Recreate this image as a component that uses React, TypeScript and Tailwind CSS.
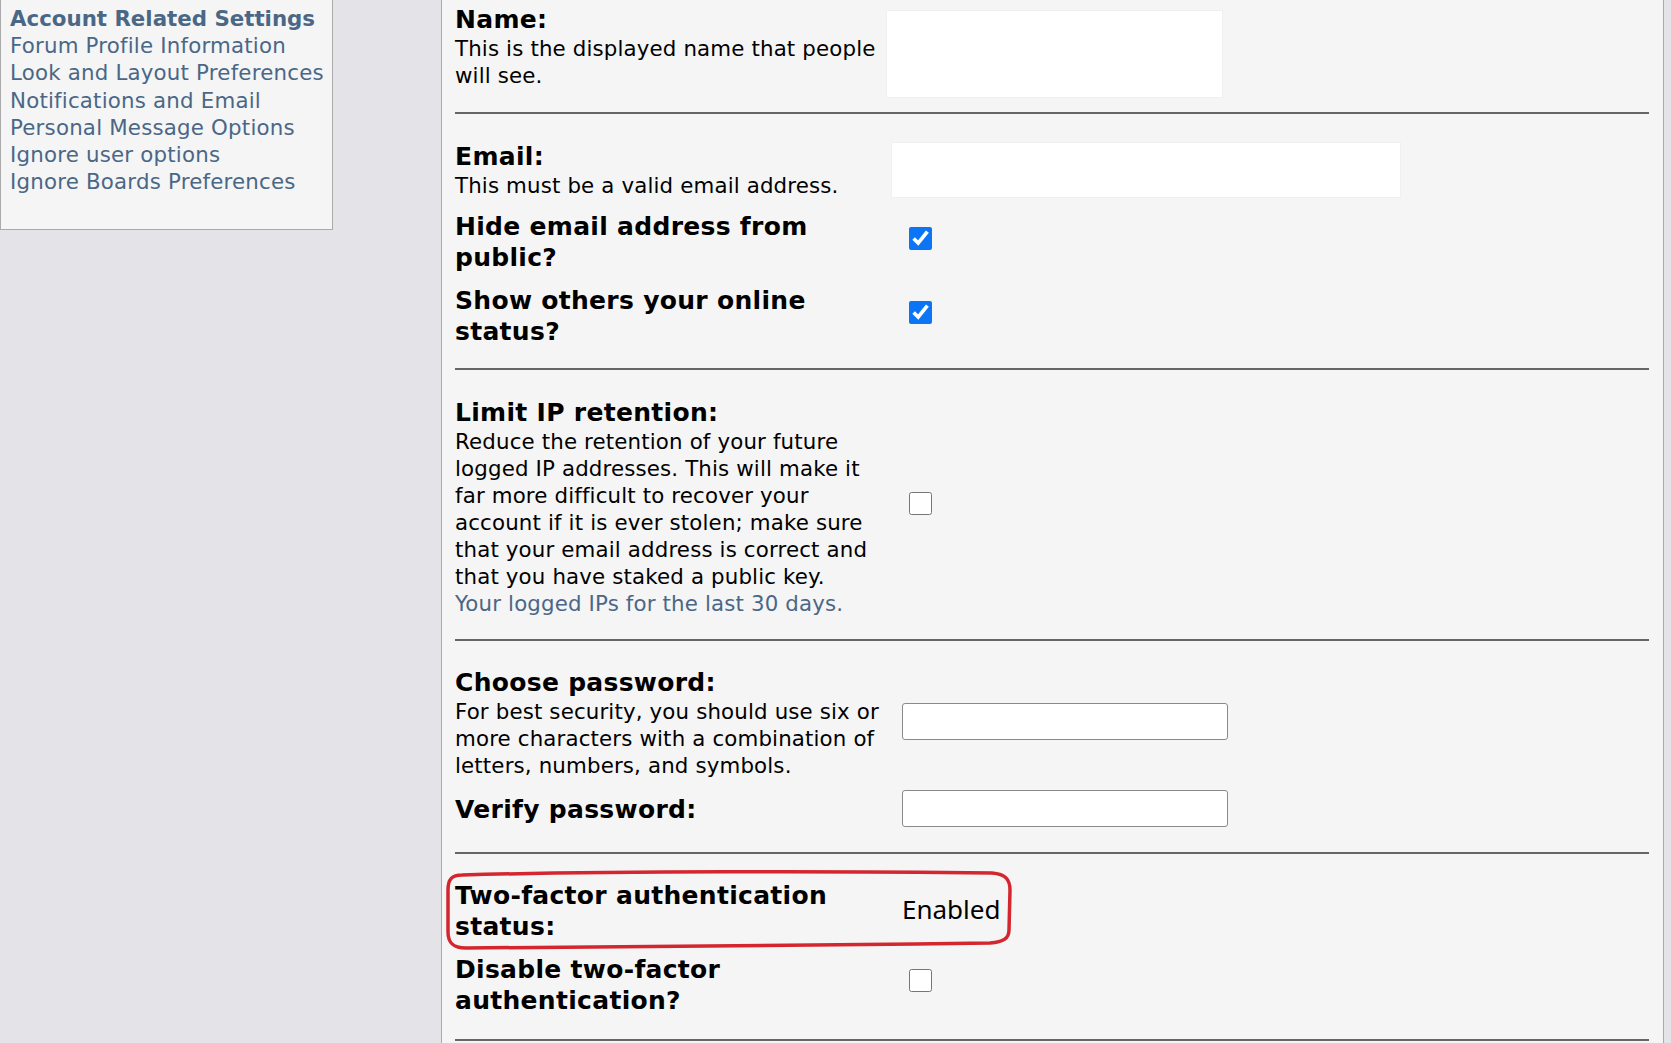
import React from 'react';

const font = { fontFamily: '"DejaVu Sans", Verdana, sans-serif' };

const sidebarLinks = [
  'Forum Profile Information',
  'Look and Layout Preferences',
  'Notifications and Email',
  'Personal Message Options',
  'Ignore user options',
  'Ignore Boards Preferences',
];

const Label = ({ children }: { children: React.ReactNode }) => (
  <div className="text-[25px] font-bold leading-[31px] tracking-[0.3px] text-black">{children}</div>
);

const Desc = ({ children }: { children: React.ReactNode }) => (
  <div className="text-[21.33px] leading-[27px] tracking-[0.15px] text-black">{children}</div>
);

const Row = ({ className, label, children }: { className?: string; label: React.ReactNode; children?: React.ReactNode }) => (
  <div className={`flex items-start ${className ?? ''}`}>
    <div className="w-[431px] shrink-0">{label}</div>
    <div className="flex-1">{children}</div>
  </div>
);

const Sep = ({ className }: { className?: string }) => <div className={`h-[2px] bg-[#666] ${className ?? ''}`} />;

const Check = ({ checked, className }: { checked?: boolean; className?: string }) => (
  <input
    type="checkbox"
    defaultChecked={checked}
    className={`m-0 ml-[23px] block h-[23px] w-[23px] accent-[#0b75f5] ${className ?? ''}`}
  />
);

export default function App() {
  return (
    <div className="relative flex min-h-screen w-full bg-[#e4e4e8]" style={font}>
      <aside className="w-[333px] shrink-0 self-start border-x border-b border-[#aaa] bg-[#f5f5f5] pb-[34px] pl-[9px] pt-[5px] text-[21.33px] leading-[27.2px] text-[#4a6786]">
        <div className="font-bold">Account Related Settings</div>
        {sidebarLinks.map((l) => (
          <div key={l} className="tracking-[0.2px]">
            {l}
          </div>
        ))}
      </aside>

      <div className="w-[108px] shrink-0" />

      <main className="flex w-[1223px] shrink-0 flex-col border-x border-[#aaa] bg-[#f5f5f5] pb-[40px] pl-[13px] pr-[14px]">
        <Row
          className="mt-[4px]"
          label={
            <>
              <Label>Name:</Label>
              <Desc>This is the displayed name that people will see.</Desc>
            </>
          }
        >
          <div className="mt-[6px] h-[88px] w-[337px] border border-[#f0f0f0] bg-white" />
        </Row>
        <Sep className="mt-[14px]" />

        <Row
          className="mt-[27px]"
          label={
            <>
              <Label>Email:</Label>
              <Desc>This must be a valid email address.</Desc>
            </>
          }
        >
          <div className="ml-[5px] mt-[1px] h-[56px] w-[510px] border border-[#f0f0f0] bg-white" />
        </Row>
        <Row className="mt-[12px]" label={<Label>Hide email address from public?</Label>}>
          <Check checked className="mt-[16px]" />
        </Row>
        <Row className="mt-[12px]" label={<Label>Show others your online status?</Label>}>
          <Check checked className="mt-[16px]" />
        </Row>
        <Sep className="mt-[21px]" />

        <Row
          className="mt-[27px]"
          label={
            <>
              <Label>Limit IP retention:</Label>
              <Desc>
                Reduce the retention of your future logged IP addresses. This will make it far more difficult to
                recover your account if it is ever stolen; make sure that your email address is correct and that you
                have staked a public key.
              </Desc>
              <Desc>
                <span className="text-[#4a6786]">Your logged IPs for the last 30 days.</span>
              </Desc>
            </>
          }
        >
          <Check className="mt-[95px]" />
        </Row>
        <Sep className="mt-[22px]" />

        <Row
          className="mt-[26px]"
          label={
            <>
              <Label>Choose password:</Label>
              <Desc>For best security, you should use six or more characters with a combination of letters, numbers, and symbols.</Desc>
            </>
          }
        >
          <input type="password" className="ml-[16px] mt-[36px] block h-[37px] w-[326px] rounded-[3px] border border-[#8a8a8a] bg-white" />
        </Row>
        <Row
          className="mt-[11px]"
          label={
            <div className="pt-[4px]">
              <Label>Verify password:</Label>
            </div>
          }
        >
          <input type="password" className="ml-[16px] block h-[37px] w-[326px] rounded-[3px] border border-[#8a8a8a] bg-white" />
        </Row>
        <Sep className="mt-[25px]" />

        <Row className="mt-[26px]" label={<Label>Two-factor authentication status:</Label>}>
          <div
            className="ml-[16px] mt-[14px] text-[26px] leading-[31px] text-black"
            style={{ fontFamily: '"Noto Sans", "Open Sans", sans-serif' }}
          >
            Enabled
          </div>
        </Row>
        <Row className="mt-[12px]" label={<Label>Disable two-factor authentication?</Label>}>
          <Check className="mt-[15px]" />
        </Row>
        <Sep className="mt-[23px]" />
        <div className="h-[60px]" />
      </main>

      <svg className="pointer-events-none absolute left-0 top-0" width="1671" height="1043" viewBox="0 0 1671 1043">
        <path
          d="M462 875 C600 871 850 871 992 873 C1006 874 1010 880 1010 890 L1009 930 C1009 938 1004 942 990 943 C800 946 600 947 466 948 C452 948 448 942 448 932 L448 890 C448 879 452 875 462 875 Z"
          fill="none"
          stroke="#d4262e"
          strokeWidth="3.5"
          strokeLinejoin="round"
        />
      </svg>
    </div>
  );
}
